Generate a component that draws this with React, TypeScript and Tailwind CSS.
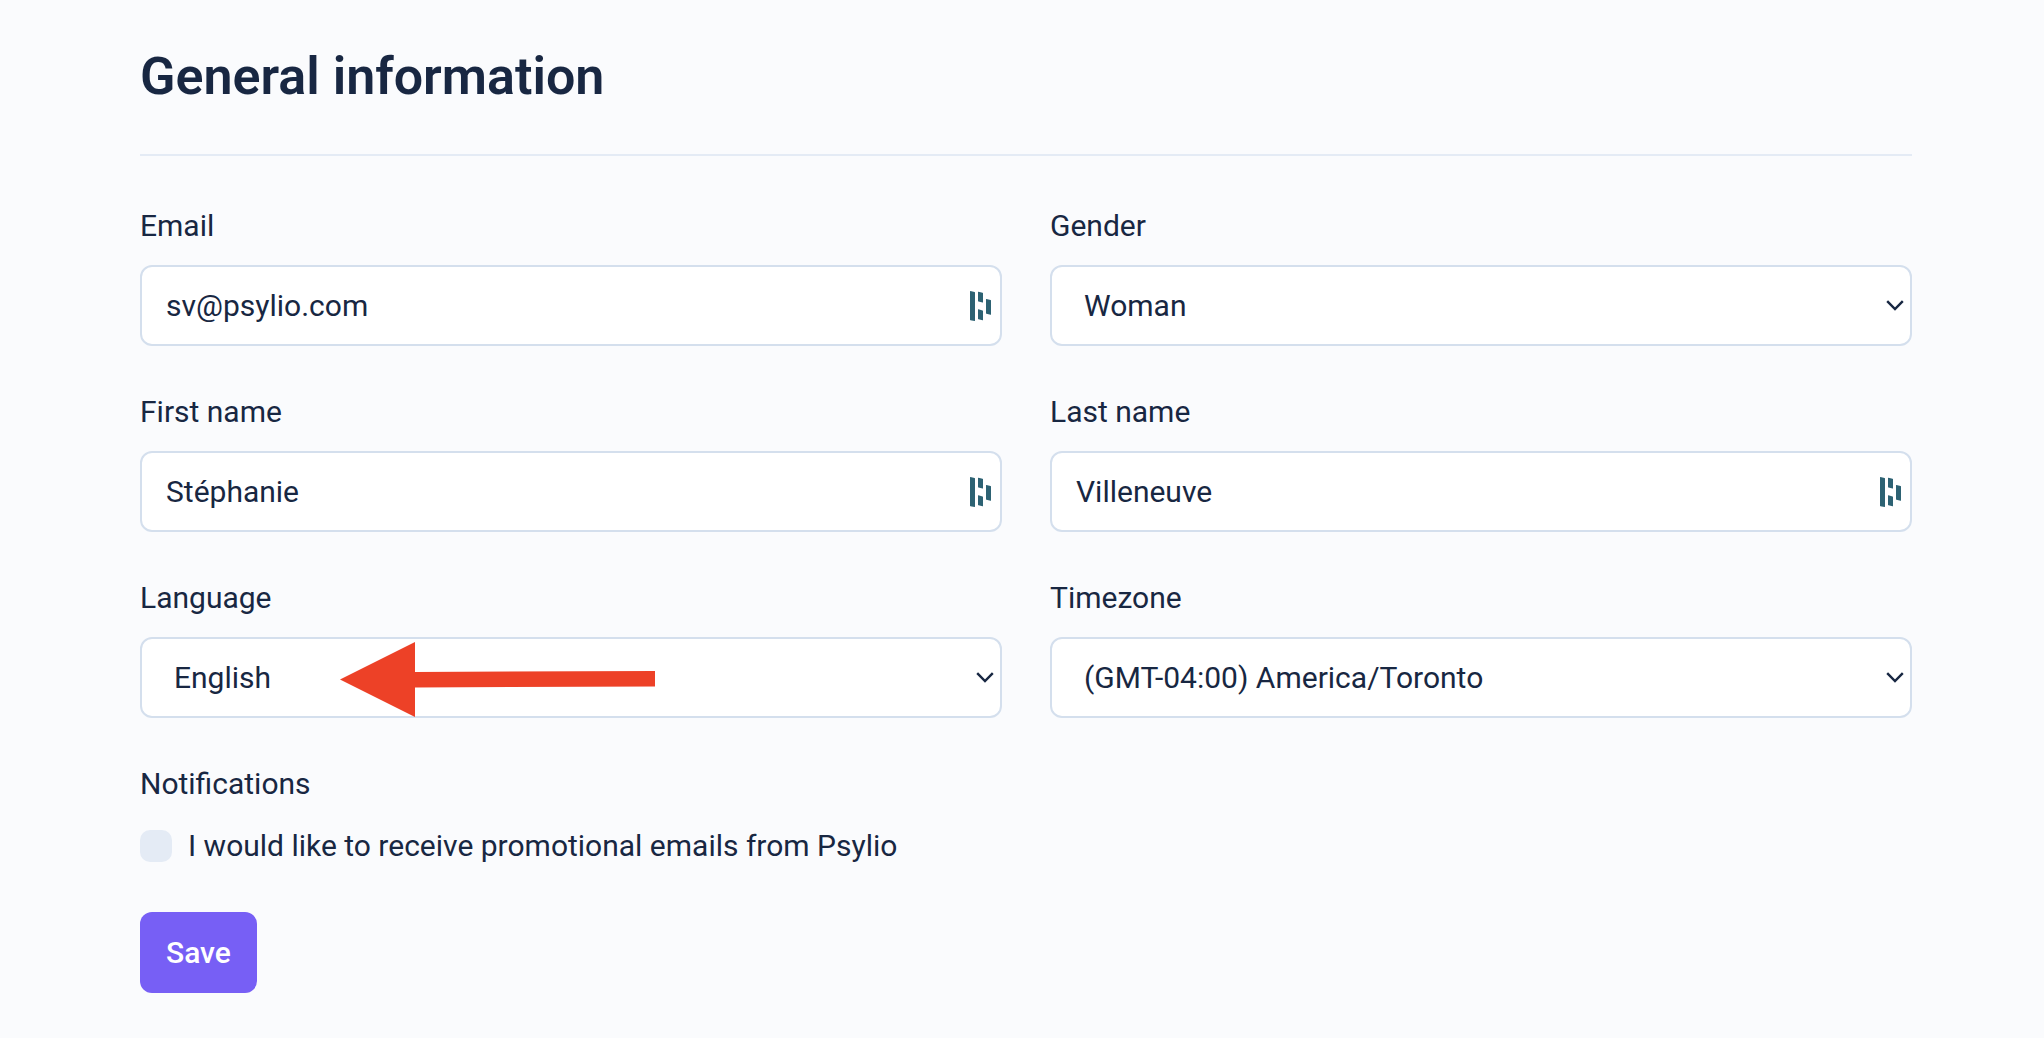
import React from "react";

const controlClass =
  "h-[81px] w-full appearance-none rounded-xl border-2 border-[#d4dfed] bg-white text-[30px] leading-9 text-[#182742] outline-none focus:border-[#775ff5]";

function Field({
  id,
  label,
  children,
}: {
  id: string;
  label: string;
  children: React.ReactNode;
}) {
  return (
    <div className="flex flex-col gap-[21px]">
      <label htmlFor={id} className="self-start text-[30px] leading-9">
        {label}
      </label>
      <div className="relative flex items-center">{children}</div>
    </div>
  );
}

// Password manager badge shown inside the text inputs
function AutofillIcon() {
  return (
    <svg
      aria-hidden="true"
      viewBox="0 0 21 30"
      className="pointer-events-none absolute right-[11px] h-[30px] w-[21px] fill-[#2d6273]"
    >
      <path d="M0 0.4Q0 0 0.4 0.1L4.6 1Q5 1.1 5 1.5V29.6Q5 30 4.6 29.9L0.4 29.2Q0 29.100 0 28.700Z" />
      <path d="M8 1.100Q8 0.700 8.400 0.800L12.600 1.800Q13 1.900 13 2.300V11.200Q13 11.600 12.600 11.500L8.400 10.400Q8 10.300 8 9.900Z" />
      <path d="M8 18.600Q8 18.200 8.400 18.300L12.600 19.400Q13 19.500 13 19.900V28.900Q13 29.300 12.600 29.200L8.400 28.200Q8 28.100 8 27.700Z" />
      <path d="M16 8.200Q16 7.800 16.400 7.900L20.600 8.900Q21 9 21 9.400V23.500Q21 23.900 20.600 23.800L16.400 22.800Q16 22.700 16 22.300Z" />
    </svg>
  );
}

function TextField({
  id,
  label,
  value,
  type = "text",
}: {
  id: string;
  label: string;
  value: string;
  type?: string;
}) {
  return (
    <Field id={id} label={label}>
      <input
        id={id}
        type={type}
        defaultValue={value}
        className={`${controlClass} pr-12 pl-6`}
      />
      <AutofillIcon />
    </Field>
  );
}

function SelectField({
  id,
  label,
  options,
  children,
}: {
  id: string;
  label: string;
  options: string[];
  children?: React.ReactNode;
}) {
  return (
    <Field id={id} label={label}>
      <select id={id} className={`${controlClass} pr-12 pl-8`}>
        {options.map((option) => (
          <option key={option}>{option}</option>
        ))}
      </select>
      <svg
        aria-hidden="true"
        viewBox="0 0 18 12"
        className="pointer-events-none absolute right-2 h-3 w-[18px] fill-none stroke-[#182742]"
        strokeWidth="2.4"
      >
        <path d="M1.2 1.2L9 9L16.8 1.2" />
      </svg>
      {children}
    </Field>
  );
}

export default function App(): React.ReactElement {
  return (
    <main className="min-h-screen bg-[#fafbfd] pt-[47px] pr-[132px] pb-11 pl-[140px] font-['Roboto',sans-serif] text-[#182742]">
      <h1 className="border-b-2 border-[#e4ebf5] pb-[47px] text-[52px] leading-[60px] font-semibold">
        General information
      </h1>

      <form className="pt-[52px]" onSubmit={(e) => e.preventDefault()}>
        <div className="grid grid-cols-2 gap-12">
          <TextField id="email" label="Email" type="email" value="sv@psylio.com" />
          <SelectField id="gender" label="Gender" options={["Woman", "Man", "Other"]} />
          <TextField id="first-name" label="First name" value="Stéphanie" />
          <TextField id="last-name" label="Last name" value="Villeneuve" />
          <SelectField id="language" label="Language" options={["English", "Français"]}>
            {/* Arrow pointing at the selected language */}
            <svg
              aria-hidden="true"
              viewBox="0 0 315 79"
              className="pointer-events-none absolute left-[200px] h-[79px] w-[315px] fill-[#ed4127]"
            >
              <path d="M0 41.5L75 4V34L315 33V48.5L75 49.5V79Z" />
            </svg>
          </SelectField>
          <SelectField
            id="timezone"
            label="Timezone"
            options={["(GMT-04:00) America/Toronto", "(GMT-07:00) America/Vancouver"]}
          />
        </div>

        <fieldset className="mt-12">
          <legend className="text-[30px] leading-9">Notifications</legend>
          <div className="mt-[26px] flex items-center gap-4">
            <input
              id="promotional"
              type="checkbox"
              className="size-8 appearance-none rounded-[10px] bg-[#e4ebf5] checked:bg-[#775ff5]"
            />
            <label htmlFor="promotional" className="text-[30px] leading-9">
              I would like to receive promotional emails from Psylio
            </label>
          </div>
        </fieldset>

        <button
          type="submit"
          className="mt-12 h-[81px] rounded-xl bg-[#775ff5] px-[26px] text-[30px] leading-9 font-medium text-white"
        >
          Save
        </button>
      </form>
    </main>
  );
}
